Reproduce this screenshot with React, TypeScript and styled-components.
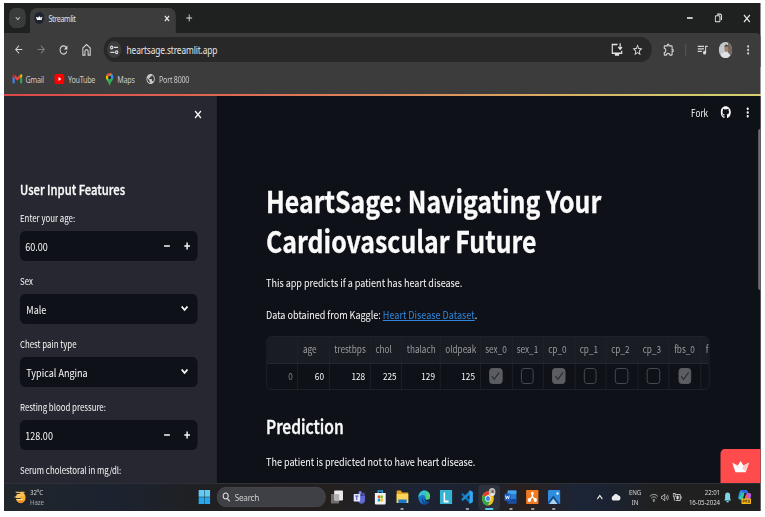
import React from 'react';
import styled, { createGlobalStyle, css } from 'styled-components';
import {
  MdArrowBack,
  MdArrowForward,
  MdRefresh,
  MdStarBorder,
  MdOutlineExtension,
  MdQueueMusic,
  MdMoreVert,
  MdClose,
  MdAdd,
  MdKeyboardArrowDown,
  MdPublic,
} from 'react-icons/md';
import { FaGithub } from 'react-icons/fa';

/* The desktop is laid out wide and squeezed horizontally to a 757px frame. */
const SQUEEZE = 0.838;
const u = (n: number) => `${(n / SQUEEZE).toFixed(2)}px`;

const UI = `"Noto Sans", "Open Sans", sans-serif`;
const SOURCE = `"Noto Sans CJK SC", "Noto Sans", sans-serif`;

const Global = createGlobalStyle`
  * { box-sizing: border-box; }
  body { margin: 0; background: #fff; overflow: hidden; }
  svg { display: block; flex: none; }
`;

const Page = styled.div`
  width: 765px;
  height: 517px;
  padding: 3px 4px;
  overflow: hidden;
  background: #fff;
`;

const Desktop = styled.div`
  width: ${u(757)};
  height: 508px;
  display: flex;
  flex-direction: column;
  transform: scaleX(${SQUEEZE});
  transform-origin: 0 0;
  overflow: hidden;
  font-family: ${UI};
  color: #e3e3e3;
  white-space: nowrap;
`;

const Slot = styled.div<{ $w: number }>`
  flex: none;
  width: ${(p) => u(p.$w)};
  display: flex;
  align-items: center;
  justify-content: center;
`;

const Gap = styled.div<{ $w: number }>`
  flex: none;
  width: ${(p) => u(p.$w)};
`;

/* ---------- browser chrome ---------- */

const TabStrip = styled.div`
  flex: none;
  height: 30px;
  display: flex;
  padding-top: 5px;
  padding-left: ${u(5)};
  background: #1f2120;
`;

const TabSearch = styled.div`
  width: ${u(17)};
  height: 20px;
  border-radius: 7px;
  background: #3a3b3b;
  display: flex;
  align-items: center;
  justify-content: center;
`;

const Tab = styled.div`
  width: ${u(146)};
  height: 25px;
  margin-left: ${u(4)};
  padding: 0 ${u(6)} 5px ${u(4)};
  border-radius: 8px 8px 0 0;
  background: #3c3c3c;
  display: flex;
  align-items: center;
  font-size: 8.5px;
  letter-spacing: -0.42px;
`;

const Favicon = styled.div`
  width: 12px;
  height: 12px;
  border-radius: 50%;
  background: #1f2230;
  display: flex;
  align-items: center;
  justify-content: center;
  margin-right: ${u(4.5)};
`;

const Grow = styled.div`
  flex: 1;
`;

const StripTools = styled.div`
  flex: 1;
  height: 20px;
  display: flex;
  align-items: center;
`;

const Toolbar = styled.div`
  flex: none;
  height: 34px;
  padding: 4px 0 5px;
  display: flex;
  align-items: center;
  background: #3c3c3c;
  border-radius: 0 5px 0 0;
  color: #d6d6d6;
`;

const ToolbarBack = styled.div`
  flex: none;
  background: #1f2120;
`;

const Omnibox = styled.div`
  width: ${u(548)};
  height: 25px;
  border-radius: 13px;
  background: #282828;
  display: flex;
  align-items: center;
  padding-left: ${u(3)};
  font-size: 10px;
  letter-spacing: -0.18px;
  color: #e6e6e6;
`;

const SiteInfo = styled.div`
  width: 17px;
  height: 17px;
  border-radius: 50%;
  background: #3c3c3c;
  display: flex;
  align-items: center;
  justify-content: center;
  margin-right: ${u(5.3)};
`;

const Divider = styled.div`
  width: 1px;
  height: 12px;
  background: #5c5c5c;
`;

const Bookmarks = styled.div`
  flex: none;
  height: 27px;
  padding: 0 0 3px ${u(8)};
  display: flex;
  align-items: center;
  background: #3c3c3c;
  color: #cacaca;
  font-size: 8.5px;
  letter-spacing: -0.28px;
`;

const Bookmark = styled.div<{ $w: number }>`
  width: ${(p) => u(p.$w)};
  display: flex;
  align-items: center;
  gap: ${u(3.5)};
`;

const Rainbow = styled.div`
  flex: none;
  height: 2px;
  background: linear-gradient(90deg, #dc4848, #dc6b53 30%, #dba05f 65%, #d3c76c 88%, #d2d072);
`;

/* ---------- app ---------- */

const AppFrame = styled.div`
  position: relative;
  flex: none;
  height: 387px;
  display: flex;
  overflow: hidden;
  background: #0e1117;
  font-family: ${SOURCE};
  color: #fafafa;
`;

const Sidebar = styled.aside`
  width: ${u(213)};
  height: 100%;
  overflow: hidden;
  background: #262730;
  padding: 0 ${u(19.5)} 0 ${u(16)};
`;

const SidebarTop = styled.div`
  height: 36px;
  margin-right: ${u(-6)};
  display: flex;
  align-items: center;
  justify-content: flex-end;
`;

const SidebarTitle = styled.h2`
  margin: 44.5px 0 0;
  height: 24px;
  line-height: 24px;
  font-size: 13.45px;
  font-weight: 500;
  -webkit-text-stroke: 0.3px #fafafa;
`;

const Field = styled.div`
  height: 63.1px;
  padding-top: 10.5px;
`;

const FieldLabel = styled.div`
  height: 15px;
  line-height: 15px;
  font-size: 9.4px;
  margin-bottom: 5px;
`;

const Control = styled.div<{ $select?: boolean }>`
  height: 29.5px;
  border-radius: 6px;
  background: #0e1117;
  display: flex;
  align-items: center;
  font-size: 10.8px;
  line-height: 20px;
  padding: 0 ${u(5)} 0 ${(p) => u(p.$select ? 6.3 : 5.3)};
`;

const Main = styled.main`
  flex: 1;
  min-width: 0;
`;

const AppHeader = styled.header`
  height: 33px;
  padding-right: ${u(5)};
  display: flex;
  align-items: center;
  justify-content: flex-end;
  font-size: 9.7px;
`;

const Content = styled.section`
  padding: 52px ${u(51.5)} 0 ${u(49)};
`;

const Title = styled.h1`
  margin: 0;
  font-size: 29.7px;
  line-height: 40px;
  font-weight: 700;
  -webkit-text-stroke: 0.3px #fafafa;
`;

const Paragraph = styled.p<{ $top: number }>`
  margin: ${(p) => p.$top}px 0 0;
  font-size: 10.8px;
  line-height: 20px;
`;

const DataLink = styled.a`
  color: #2f86dc;
  text-decoration: underline;
`;

const Heading = styled.h2`
  margin: 19.5px 0 0;
  font-size: 18.7px;
  line-height: 32px;
  font-weight: 500;
  -webkit-text-stroke: 0.45px #fafafa;
`;

const Table = styled.div`
  margin-top: 11.5px;
  height: 54.5px;
  border: 1px solid #20232a;
  border-radius: 6px;
  overflow: hidden;
`;

const Row = styled.div<{ $head?: boolean }>`
  display: flex;
  height: ${(p) => (p.$head ? 27 : 26)}px;
  font-size: 9.8px;
  ${(p) =>
    p.$head &&
    css`
      background: #1a1c24;
      border-bottom: 1px solid #262930;
      color: #9b9ca1;
    `}
`;

const Cell = styled.div<{ $w: number; $align?: string; $dim?: boolean }>`
  flex: none;
  width: ${(p) => u(p.$w)};
  padding: 0 ${u(5)} 1px ${u(4.4)};
  border-right: 1px solid #20232a;
  display: flex;
  align-items: center;
  justify-content: ${(p) => p.$align || 'flex-start'};
  ${(p) => p.$dim && 'color: #85868b;'}
`;

const CheckBox = styled.div<{ $on: boolean }>`
  width: 15.5px;
  height: 15.5px;
  border-radius: 3.5px;
  background: ${(p) => (p.$on ? '#5b5d62' : 'transparent')};
  border: 1px solid ${(p) => (p.$on ? '#5b5d62' : '#4c4f55')};
  display: flex;
  align-items: center;
  justify-content: center;
`;

const ScrollThumb = styled.div`
  position: absolute;
  right: 0;
  top: 33px;
  width: ${u(2.6)};
  height: 161px;
  background: #6d6e72;
  border-radius: 2px 0 0 2px;
`;

const HostBadge = styled.div`
  position: absolute;
  right: 0;
  bottom: 0;
  width: ${u(40.5)};
  height: 34px;
  padding-top: 2px;
  border-radius: 5px 0 0 0;
  background: #ff4b4b;
  display: flex;
  align-items: center;
  justify-content: center;
`;

/* ---------- taskbar ---------- */

const Taskbar = styled.div`
  flex: none;
  height: 28px;
  padding-bottom: 1px;
  display: flex;
  align-items: center;
  border-top: 1px solid #2d3034;
  background: linear-gradient(90deg, #20262a 0%, #1c2330 14%, #1f2022 26%, #241f20 36%, #23201f 44%, #1c2333 54%, #1c2231 62%, #2a201f 69%, #1c2538 76%, #1b2331 80%, #202020 86%, #202020 100%);
  color: #dcdcdc;
  font-size: 8.3px;
`;

const TwoLine = styled.div<{ $align?: string; $w: number }>`
  width: ${(p) => u(p.$w)};
  line-height: 10px;
  font-size: 7.3px;
  letter-spacing: -0.1px;
  text-align: ${(p) => p.$align || 'left'};
`;

const Faint = styled.div`
  color: #a2a6a8;
`;

const SearchPill = styled.div`
  width: ${u(108.5)};
  height: 20px;
  border-radius: 10px;
  background: #3f4045;
  border: 1px solid #46474c;
  display: flex;
  align-items: center;
  padding-left: ${u(4.5)};
  gap: ${u(4)};
  font-size: 9.8px;
  letter-spacing: -0.3px;
  color: #cfcfcf;
`;

const TaskApp = styled.div<{ $active?: boolean; $running?: boolean }>`
  flex: none;
  position: relative;
  width: ${u(21.7)};
  height: 25px;
  display: flex;
  align-items: center;
  justify-content: center;
  border-radius: 4px;
  background: ${(p) => (p.$active ? '#2d323d' : 'transparent')};
  &::after {
    content: '';
    display: ${(p) => (p.$active || p.$running ? 'block' : 'none')};
    position: absolute;
    bottom: 0;
    width: ${(p) => (p.$active ? 10 : 4)}px;
    height: 2px;
    border-radius: 1px;
    background: ${(p) => (p.$active ? '#5cc6e0' : '#9c9ea2')};
  }
`;

/* ---------- drawings ---------- */

const Crown = ({ w, main = '#fff', shade = '#ffc9c9' }: { w: number; main?: string; shade?: string }) => (
  <svg width={w} height={w * 0.56} viewBox="0 0 36 20">
    <path d="M0 3 L12 8 L18 0 L24 8 L36 3 L29 20 H7 Z" fill={main} />
    <path d="M0 3 L12 8 L15 13 Z" fill={shade} />
    <path d="M36 3 L24 8 L22 14 L29 19 Z" fill={shade} />
  </svg>
);

const Cross = ({ size, weight = 1.7 }: { size: number; weight?: number }) => (
  <svg width={size} height={size} viewBox={`0 0 ${size} ${size}`} fill="none" stroke="currentColor" strokeWidth={weight}>
    <path d={`M1 1L${size - 1} ${size - 1}M${size - 1} 1L1 ${size - 1}`} />
  </svg>
);

const HomeIcon = () => (
  <svg width="15" height="15" viewBox="0 0 24 24" fill="none" stroke="currentColor" strokeWidth="2">
    <path d="M5 21V9.5L12 4l7 5.5V21h-4v-6a3 3 0 0 0-6 0v6z" />
  </svg>
);

const TuneIcon = () => (
  <svg width="11" height="12" viewBox="0 0 24 24" fill="none" stroke="#dcdcdc" strokeWidth="2.8">
    <circle cx="5.500" cy="6.5" r="3" />
    <path d="M11 6.5h11M2 17h11" />
    <circle cx="18.500" cy="17" r="3" />
  </svg>
);

const InstallIcon = () => (
  <svg width="15" height="15" viewBox="0 0 24 24" fill="none" stroke="currentColor" strokeWidth="2.2">
    <path d="M13 4H3v14h18v-4" />
    <path d="M18 2v9M14.5 8l3.5 3.5L21.500 8" />
    <path d="M8 20.500h8" strokeWidth="3" />
  </svg>
);

const RestoreIcon = () => (
  <svg width="9" height="10" viewBox="0 0 12 13" fill="none" stroke="#e8e8e8" strokeWidth="1.600">
    <rect x="1" y="3.500" width="7.500" height="8" rx="1.500" />
    <path d="M4 1.200h4.500a2.500 2.500 0 0 1 2.500 2.500V9" />
  </svg>
);

const Avatar = () => (
  <svg width="16" height="16" viewBox="0 0 16 16">
    <defs>
      <clipPath id="avatar">
        <circle cx="8" cy="8" r="8" />
      </clipPath>
    </defs>
    <g clipPath="url(#avatar)">
      <rect width="16" height="16" fill="#c4c8ca" />
      <rect x="11" width="5" height="16" fill="#73675f" />
      <path d="M2 16c0-4 3-6 6-6s6 2 6 6z" fill="#dfe3e7" />
      <ellipse cx="9" cy="7" rx="2.200" ry="3" fill="#a67c68" />
      <path d="M6.500 5.500c0-4 5-4 5 0l-1-1H7.500z" fill="#4a403c" />
    </g>
  </svg>
);

const GmailIcon = () => (
  <svg width="12" height="9.500" viewBox="0 0 24 18">
    <path d="M0 2.500V18h5.500V7z" fill="#4285f4" />
    <path d="M24 2.500V18h-5.500V7z" fill="#34a853" />
    <path d="M18.500 1v7L24 4V2.500C24 0 21-1 18.500 1z" fill="#fbbc04" />
    <path d="M5.500 1L12 6l6.500-5v7L12 13 5.500 8z" fill="#ea4335" />
    <path d="M5.500 1v7L0 4V2.500C0 0 3-1 5.500 1z" fill="#c5221f" />
  </svg>
);

const YouTubeIcon = () => (
  <svg width="12.500" height="10" viewBox="0 0 25 20">
    <rect width="25" height="20" rx="5" fill="#f00" />
    <path d="M10 6v8l7-4z" fill="#fff" />
  </svg>
);

const MapsIcon = () => (
  <svg width="10" height="13" viewBox="0 0 20 26">
    <path d="M10 0a9 9 0 0 0-9 9c0 6 6 8 9 17 3-9 9-11 9-17a9 9 0 0 0-9-9z" fill="#34a853" />
    <path d="M15 1.500L4 14C2 12 1 10 1 8l3-5z" fill="#fbbc04" />
    <path d="M10 0a9 9 0 0 0-7.500 4L6 7l8.500-6A9 9 0 0 0 10 0z" fill="#ea4335" />
    <path d="M14.500 1L9 9l9 3c2-4 0-9-3.500-11z" fill="#4285f4" />
    <circle cx="10" cy="9" r="3.300" fill="#202124" />
  </svg>
);

const Chevron = () => (
  <svg width="9" height="7" viewBox="0 0 9 7" fill="none" stroke="#fafafa" strokeWidth="1.800">
    <path d="M1 1.500l3.500 3.500L8 1.500" />
  </svg>
);

const Minus = () => (
  <svg width="7" height="8" viewBox="0 0 7 8" stroke="#fafafa" strokeWidth="1.600">
    <path d="M0 4h7" />
  </svg>
);

const Plus = () => (
  <svg width="7" height="8" viewBox="0 0 7 8" stroke="#fafafa" strokeWidth="1.700">
    <path d="M0 4h7M3.500.500v7" />
  </svg>
);

const Tick = () => (
  <svg width="11" height="10" viewBox="0 0 11 10" fill="none" stroke="#2c2e33" strokeWidth="1.300">
    <path d="M1 5.200l3 3L10 1.500" />
  </svg>
);

const WeatherIcon = () => (
  <svg width="15" height="14" viewBox="0 0 30 28">
    <circle cx="16" cy="15" r="11.500" fill="#f8b234" />
    <path d="M7 22c6 6 14 5 18-1z" fill="#ef8b22" />
    <path d="M4 7h10M1 17h15" stroke="#2a2a2a" strokeWidth="2" />
    <path d="M4 4.500h9M17 4.500h8M8 10h15M1 14h14M6 19h15" stroke="#ffe0a0" strokeWidth="2" />
  </svg>
);

const StartIcon = () => (
  <svg width="14.500" height="14" viewBox="0 0 29 28">
    <path d="M0 0h14v13.500H0zM15 0h14v13.500H15z" fill="#62cbf5" />
    <path d="M0 14.500h14V28H0zM15 14.500h14V28H15z" fill="#26a8ee" />
  </svg>
);

const SearchIcon = () => (
  <svg width="10" height="10" viewBox="0 0 20 20" fill="none" stroke="#e4e4e4" strokeWidth="2.400">
    <circle cx="9" cy="8" r="6" />
    <path d="M13 13l5.500 5.500" />
  </svg>
);

const TaskViewIcon = () => (
  <svg width="15" height="14" viewBox="0 0 30 28">
    <rect x="0" y="8" width="20" height="19" rx="2" fill="#6f6d6c" />
    <rect x="8" y="1" width="21" height="20" rx="2" fill="#eceaea" />
    <rect x="8" y="8" width="12" height="13" fill="#b4b2b2" />
  </svg>
);

const TeamsIcon = () => (
  <svg width="14" height="13" viewBox="0 0 28 26">
    <circle cx="16" cy="4" r="4" fill="#7b83eb" />
    <circle cx="24" cy="6" r="3" fill="#5059c9" />
    <path d="M10 9h18v9c0 8-14 11-17 2z" fill="#6068d4" />
    <rect x="0" y="6" width="16" height="15" rx="2" fill="#e6e8fa" />
    <path d="M4 10h8M8 10v8" stroke="#4b53bc" strokeWidth="2.400" />
  </svg>
);

const StoreIcon = () => (
  <svg width="14" height="15" viewBox="0 0 28 30">
    <path d="M9 7V2h10v5" fill="none" stroke="#2a9fe0" strokeWidth="3" />
    <path d="M1 6h26v20a3 3 0 0 1-3 3H4a3 3 0 0 1-3-3z" fill="#f0f2f4" />
    <path d="M8 11h5.500v5.500H8z" fill="#f25022" />
    <path d="M14.500 11H20v5.500h-5.500z" fill="#7fba00" />
    <path d="M8 17.500h5.500V23H8z" fill="#00a4ef" />
    <path d="M14.500 17.500H20V23h-5.500z" fill="#ffb900" />
  </svg>
);

const ExplorerIcon = () => (
  <svg width="15" height="14" viewBox="0 0 30 28">
    <path d="M1 3a2 2 0 0 1 2-2h8l3 4h13a2 2 0 0 1 2 2v18H1z" fill="#e5a51c" />
    <path d="M1 8h28v18H1z" fill="#ffd45a" />
    <path d="M5 19h20v7H5z" fill="#1c79c9" />
  </svg>
);

const EdgeIcon = () => (
  <svg width="15" height="15" viewBox="0 0 30 30">
    <circle cx="15" cy="15" r="14" fill="#1478c8" />
    <path d="M1 15C1 6 8 1 15 1c8 0 14 5 14 11 0 5-4 7-8 7-3 0-4-1-3-3 1-3-2-6-6-6C6 10 2 13 1 15z" fill="#35bfd0" />
    <path d="M19 2c6 2 10 6 10 10 0 5-4 7-8 7-3 0-4-1-3-3 3-4 4-9 1-14z" fill="#58d46c" />
    <path d="M13 13c-3 6 1 12 9 11 2 0 4-1 5-2-1 4-6 7-12 7C9 28 6 18 13 13z" fill="#0d4f9e" />
    <path d="M17 15c0 5 4 7 12 3l-2 5c-8 2-13-2-10-8z" fill="#1b2230" />
  </svg>
);

const LIcon = () => (
  <svg width="15" height="14" viewBox="0 0 30 28">
    <rect width="30" height="28" fill="#35b3d1" />
    <path d="M11 5v18h10" fill="none" stroke="#fff" strokeWidth="3.600" />
  </svg>
);

const VsCodeIcon = () => (
  <svg width="15" height="14" viewBox="0 0 30 28">
    <path d="M2 8l3-2 17 14v7L2 10z" fill="#0f76bd" />
    <path d="M2 20l3 2L22 9V1L2 18z" fill="#1b8ad6" />
    <path d="M21 0l8 4v20l-8 4z" fill="#35a9f2" />
  </svg>
);

const ChromeIcon = () => (
  <svg width="17" height="18" viewBox="0 0 34 36">
    <circle cx="15" cy="21" r="14" fill="#fbc116" />
    <path d="M15 21L3 14a14 14 0 0 1 24-1H15z" fill="#e33b2e" />
    <path d="M3 14a14 14 0 0 0 12 21l6-11-6-3z" fill="#2da94f" />
    <circle cx="15" cy="21" r="6.500" fill="#fff" />
    <circle cx="15" cy="21" r="5" fill="#4285f4" />
    <circle cx="25" cy="8" r="8" fill="#b9bbbb" />
    <circle cx="26" cy="7" r="3" fill="#7c5e50" />
    <path d="M19 13c3-4 9-4 12 0-3 4-9 4-12 0z" fill="#e2e5e8" />
  </svg>
);

const WordIcon = () => (
  <svg width="15" height="14" viewBox="0 0 30 28">
    <rect x="8" y="1" width="21" height="26" rx="2" fill="#2b7cd3" />
    <path d="M8 1h21v7H8z" fill="#45a5ee" />
    <path d="M8 18h21v9H8z" fill="#154a9c" />
    <rect x="0" y="7" width="15" height="15" rx="1" fill="#1d5cbe" />
    <path d="M3 11l2 7 2.500-6 2.500 6 2-7" fill="none" stroke="#fff" strokeWidth="1.800" />
  </svg>
);

const XamppIcon = () => (
  <svg width="15" height="14" viewBox="0 0 30 28">
    <rect width="30" height="28" rx="1" fill="#f37a1f" />
    <path d="M15 8v6M15 13l-7 7M15 13l7 7" stroke="#fff" strokeWidth="3" />
    <circle cx="15" cy="7" r="3.500" fill="#fff" />
    <circle cx="8" cy="20" r="4" fill="#fff" />
    <circle cx="22" cy="20" r="4" fill="#fff" />
  </svg>
);

const PhotosIcon = () => (
  <svg width="15" height="14" viewBox="0 0 30 28">
    <rect width="30" height="28" rx="3" fill="#2f8de0" />
    <path d="M0 25L13 11l15 17H2z" fill="#1c4a86" />
    <path d="M3 28L13 17l10 11z" fill="#a9d4f2" />
    <circle cx="23" cy="7" r="2.500" fill="#fff" />
  </svg>
);

const CaretUp = () => (
  <svg width="8" height="6" viewBox="0 0 8 6" fill="none" stroke="#e8e8e8" strokeWidth="1.200">
    <path d="M1 5l3-3.500L7 5" />
  </svg>
);

const CloudIcon = () => (
  <svg width="11" height="8" viewBox="0 0 22 16">
    <path d="M5 15a4.500 4.500 0 0 1-1-9 7 7 0 0 1 12-1 5 5 0 0 1 1 10z" fill="#e8eaec" />
  </svg>
);

const WifiIcon = () => (
  <svg width="11" height="9" viewBox="0 0 22 18" fill="none" stroke="#c8c8c8" strokeWidth="1.700">
    <path d="M1 7a14 14 0 0 1 20 0M4.500 10.500a9 9 0 0 1 13 0M8 14a4.500 4.500 0 0 1 6 0" />
    <circle cx="11" cy="16" r="1" fill="#c8c8c8" />
  </svg>
);

const VolumeIcon = () => (
  <svg width="10" height="9" viewBox="0 0 20 18" fill="none" stroke="#d0d0d0" strokeWidth="1.600">
    <path d="M1 6.500h3.500L9 2v14l-4.500-4.500H1z" />
    <path d="M12 6c1.500 2 1.500 4 0 6M15 3.500c3 3.500 3 7.500 0 11" />
  </svg>
);

const BatteryIcon = () => (
  <svg width="11" height="10" viewBox="0 0 22 20" fill="none" stroke="#dedede" strokeWidth="1.800">
    <path d="M7 5h11v12H7M20.500 9v4" />
    <path d="M10 8h3v6h-3z" fill="#dedede" />
    <path d="M1 3h5v5a2.500 2.500 0 0 1-5 0zM4 11v6" />
  </svg>
);

const BellIcon = () => (
  <svg width="9" height="11" viewBox="0 0 18 22">
    <path d="M9 1a6 6 0 0 0-6 6v6l-2 4h16l-2-4V7a6 6 0 0 0-6-6zM6 18h6a3 3 0 0 1-6 0z" fill="#7cd5e8" />
  </svg>
);

const CopilotIcon = () => (
  <svg width="16" height="16" viewBox="0 0 32 32">
    <path d="M9 2h10c3 0 3 3 4 6H14l-4 13H5c-6 0-5-6-3-11 2-6 3-8 7-8z" fill="#2a8fe8" />
    <path d="M9 2h8l-6 19H5c-3 0-4-2-4-4l7-6z" fill="#35c6a5" />
    <path d="M19 2c3 0 3 3 4 6h4c6 0 4 7 2 12-1 3-3 5-6 5h-8l5-16z" fill="#c15be0" />
    <path d="M9 2h10c3 0 3 3 4 6h-9L8 6z" fill="#2868dc" />
    <path d="M16 21l2-9h5l-3 12z" fill="#f0644e" />
    <rect x="8" y="19" width="23" height="11" rx="2" fill="#f5b81c" />
    <path d="M12 27v-5h3v3h-3M18 27v-5h3l-2 2 2 3M24 22h3v5h-3z" fill="none" stroke="#4a3405" strokeWidth="1.300" />
  </svg>
);

/* ---------- composed parts ---------- */

const NumberField = ({ label, value }: { label: string; value: string }) => (
  <Field>
    <FieldLabel>{label}</FieldLabel>
    <Control>
      {value}
      <Grow />
      <Minus />
      <Gap $w={14} />
      <Plus />
      <Gap $w={2.6} />
    </Control>
  </Field>
);

const SelectField = ({ label, value }: { label: string; value: string }) => (
  <Field>
    <FieldLabel>{label}</FieldLabel>
    <Control $select>
      {value}
      <Grow />
      <Chevron />
      <Gap $w={4} />
    </Control>
  </Field>
);

type Column = { name: string; w: number; value: string | boolean };

const columns: Column[] = [
  { name: 'age', w: 31.3, value: '60' },
  { name: 'trestbps', w: 41.2, value: '128' },
  { name: 'chol', w: 31.4, value: '225' },
  { name: 'thalach', w: 38.4, value: '129' },
  { name: 'oldpeak', w: 40, value: '125' },
  { name: 'sex_0', w: 31.5, value: true },
  { name: 'sex_1', w: 31.5, value: false },
  { name: 'cp_0', w: 31.5, value: true },
  { name: 'cp_1', w: 31.5, value: false },
  { name: 'cp_2', w: 31.5, value: false },
  { name: 'cp_3', w: 31.5, value: false },
  { name: 'fbs_0', w: 31.5, value: true },
];

const DataTable = () => (
  <Table>
    <Row $head>
      <Cell $w={31.7} />
      {columns.map((c) => (
        <Cell key={c.name} $w={c.w}>
          {c.name}
        </Cell>
      ))}
      <Cell $w={31.5}>fbs_1</Cell>
    </Row>
    <Row>
      <Cell $w={31.7} $align="flex-end" $dim>
        0
      </Cell>
      {columns.map((c) =>
        typeof c.value === 'boolean' ? (
          <Cell key={c.name} $w={c.w} $align="center">
            <CheckBox $on={c.value}>{c.value && <Tick />}</CheckBox>
          </Cell>
        ) : (
          <Cell key={c.name} $w={c.w} $align="flex-end">
            {c.value}
          </Cell>
        ),
      )}
    </Row>
  </Table>
);

const BrowserChrome = () => (
  <>
    <TabStrip>
      <TabSearch>
        <MdKeyboardArrowDown size={11} />
      </TabSearch>
      <Tab>
        <Favicon>
          <Crown w={8} shade="#dadada" />
        </Favicon>
        Streamlit
        <Grow />
        <Cross size={7} weight={1.5} />
      </Tab>
      <StripTools>
        <Gap $w={6} />
        <Slot $w={14}>
          <MdAdd size={12} />
        </Slot>
        <Grow />
        <Slot $w={29}>
          <Minus />
        </Slot>
        <Slot $w={29}>
          <RestoreIcon />
        </Slot>
        <Slot $w={28}>
          <Cross size={9} weight={1.4} />
        </Slot>
      </StripTools>
    </TabStrip>
    <ToolbarBack>
      <Toolbar>
        <Gap $w={3.3} />
        <Slot $w={22.6}>
          <MdArrowBack size={13} />
        </Slot>
        <Slot $w={22.6}>
          <MdArrowForward size={13} color="#808080" />
        </Slot>
        <Slot $w={22.6}>
          <MdRefresh size={14} />
        </Slot>
        <Slot $w={22.6}>
          <HomeIcon />
        </Slot>
        <Gap $w={6.3} />
        <Omnibox>
          <SiteInfo>
            <TuneIcon />
          </SiteInfo>
          heartsage.streamlit.app
          <Grow />
          <Slot $w={20.5}>
            <InstallIcon />
          </Slot>
          <Slot $w={20.5}>
            <MdStarBorder size={14} />
          </Slot>
          <Gap $w={4.2} />
        </Omnibox>
        <Gap $w={7} />
        <Slot $w={20}>
          <MdOutlineExtension size={15} />
        </Slot>
        <Slot $w={13}>
          <Divider />
        </Slot>
        <Slot $w={21}>
          <MdQueueMusic size={15} />
        </Slot>
        <Slot $w={25}>
          <Avatar />
        </Slot>
        <Slot $w={20}>
          <MdMoreVert size={14} />
        </Slot>
      </Toolbar>
    </ToolbarBack>
    <Bookmarks>
      <Bookmark $w={42}>
        <GmailIcon />
        Gmail
      </Bookmark>
      <Bookmark $w={51.5}>
        <YouTubeIcon />
        YouTube
      </Bookmark>
      <Bookmark $w={40}>
        <MapsIcon />
        Maps
      </Bookmark>
      <Bookmark $w={60}>
        <MdPublic size={12} />
        Port 8000
      </Bookmark>
    </Bookmarks>
    <Rainbow />
  </>
);

const StreamlitApp = () => (
  <AppFrame>
    <Sidebar>
      <SidebarTop>
        <Cross size={9} weight={1.6} />
        <Gap $w={1.5} />
      </SidebarTop>
      <SidebarTitle>User Input Features</SidebarTitle>
      <NumberField label="Enter your age:" value="60.00" />
      <SelectField label="Sex" value="Male" />
      <SelectField label="Chest pain type" value="Typical Angina" />
      <NumberField label="Resting blood pressure:" value="128.00" />
      <Field>
        <FieldLabel>Serum cholestoral in mg/dl:</FieldLabel>
      </Field>
    </Sidebar>
    <Main>
      <AppHeader>
        Fork
        <Gap $w={12.5} />
        <FaGithub size={12.5} />
        <Gap $w={9} />
        <Slot $w={16}>
          <MdMoreVert size={15} />
        </Slot>
      </AppHeader>
      <Content>
        <Title>
          HeartSage: Navigating Your
          <br />
          Cardiovascular Future
        </Title>
        <Paragraph $top={11}>This app predicts if a patient has heart disease.</Paragraph>
        <Paragraph $top={12}>
          Data obtained from Kaggle: <DataLink>Heart Disease Dataset</DataLink>.
        </Paragraph>
        <DataTable />
        <Heading>Prediction</Heading>
        <Paragraph $top={9}>The patient is predicted not to have heart disease.</Paragraph>
      </Content>
    </Main>
    <ScrollThumb />
    <HostBadge>
      <Crown w={20} />
    </HostBadge>
  </AppFrame>
);

const WindowsTaskbar = () => (
  <Taskbar>
    <Gap $w={8} />
    <Slot $w={17}>
      <WeatherIcon />
    </Slot>
    <Gap $w={1} />
    <TwoLine $w={164}>
      32°C
      <Faint>Haze</Faint>
    </TwoLine>
    <Slot $w={21}>
      <StartIcon />
    </Slot>
    <Gap $w={2} />
    <SearchPill>
      <SearchIcon />
      Search
    </SearchPill>
    <Gap $w={1} />
    <TaskApp>
      <TaskViewIcon />
    </TaskApp>
    <TaskApp>
      <TeamsIcon />
    </TaskApp>
    <TaskApp>
      <StoreIcon />
    </TaskApp>
    <TaskApp $running>
      <ExplorerIcon />
    </TaskApp>
    <TaskApp>
      <EdgeIcon />
    </TaskApp>
    <TaskApp>
      <LIcon />
    </TaskApp>
    <TaskApp $running>
      <VsCodeIcon />
    </TaskApp>
    <TaskApp $active>
      <ChromeIcon />
    </TaskApp>
    <TaskApp $running>
      <WordIcon />
    </TaskApp>
    <TaskApp $running>
      <XamppIcon />
    </TaskApp>
    <TaskApp $running>
      <PhotosIcon />
    </TaskApp>
    <Grow />
    <Slot $w={15}>
      <CaretUp />
    </Slot>
    <Slot $w={17}>
      <CloudIcon />
    </Slot>
    <TwoLine $w={21} $align="center">
      ENG
      <div>IN</div>
    </TwoLine>
    <Gap $w={2} />
    <Slot $w={12}>
      <WifiIcon />
    </Slot>
    <Slot $w={11.5}>
      <VolumeIcon />
    </Slot>
    <Slot $w={12}>
      <BatteryIcon />
    </Slot>
    <TwoLine $w={37} $align="right">
      22:01
      <div>16-05-2024</div>
    </TwoLine>
    <Slot $w={15}>
      <BellIcon />
    </Slot>
    <Slot $w={20}>
      <CopilotIcon />
    </Slot>
    <Gap $w={6} />
  </Taskbar>
);

export default function App() {
  return (
    <>
      <Global />
      <Page>
        <Desktop>
          <BrowserChrome />
          <StreamlitApp />
          <WindowsTaskbar />
        </Desktop>
      </Page>
    </>
  );
}
